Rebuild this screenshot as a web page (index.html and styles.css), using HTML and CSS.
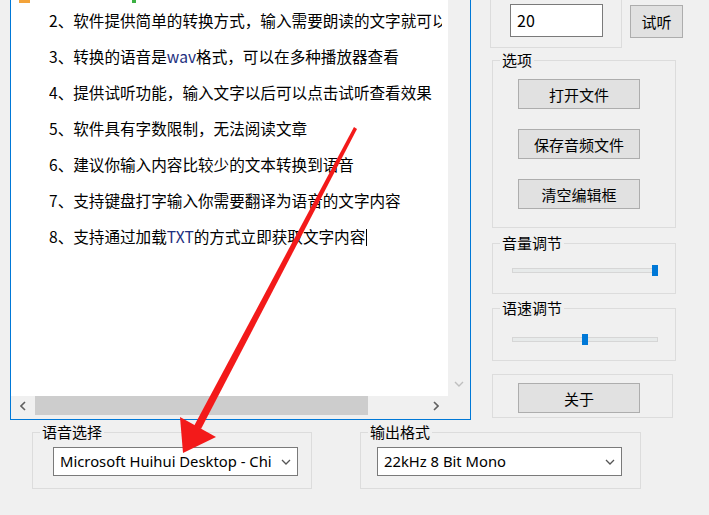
FILE: index.html
```html
<!DOCTYPE html>
<html lang="zh-CN">
<head>
<meta charset="utf-8">
<title>文字转语音</title>
<link rel="stylesheet" href="styles.css">
</head>
<body>
<div class="window">
  <div class="top">
    <div class="editor">
      <div class="content">
        <span class="peek peek-o"></span><span class="peek peek-g"></span>
        <p>2、软件提供简单的转换方式，输入需要朗读的文字就可以将文字转换为语音</p>
        <p>3、转换的语音是<span class="hl">wav</span>格式，可以在多种播放器查看</p>
        <p>4、提供试听功能，输入文字以后可以点击试听查看效果</p>
        <p>5、软件具有字数限制，无法阅读文章</p>
        <p>6、建议你输入内容比较少的文本转换到语音</p>
        <p>7、支持键盘打字输入你需要翻译为语音的文字内容</p>
        <p>8、支持通过加载<span class="hl">TXT</span>的方式立即获取文字内容<span class="caret"></span></p>
      </div>
      <div class="vscroll">
        <svg class="chev" width="10" height="6" viewBox="0 0 10 6"><polyline points="1,1 5,5 9,1" fill="none" stroke="#bfbfbf" stroke-width="1.4"/></svg>
      </div>
      <div class="hscroll">
        <div class="sbtn"><svg width="6" height="10" viewBox="0 0 6 10"><polyline points="5,1 1,5 5,9" fill="none" stroke="#606060" stroke-width="1.6"/></svg></div>
        <div class="thumb"></div>
        <div class="track"></div>
        <div class="sbtn"><svg width="6" height="10" viewBox="0 0 6 10"><polyline points="1,1 5,5 1,9" fill="none" stroke="#606060" stroke-width="1.6"/></svg></div>
      </div>
      <div class="corner"></div>
    </div>

    <div class="side">
      <div class="row1">
        <div class="group g-count">
          <div class="input">20</div>
        </div>
        <div class="btn btn-listen">试听</div>
      </div>

      <div class="group g-options">
        <span class="glabel">选项</span>
        <div class="btn btn-wide">打开文件</div>
        <div class="btn btn-wide">保存音频文件</div>
        <div class="btn btn-wide">清空编辑框</div>
      </div>

      <div class="group g-volume">
        <span class="glabel">音量调节</span>
        <div class="slider"><span class="knob knob-vol"></span></div>
      </div>

      <div class="group g-speed">
        <span class="glabel">语速调节</span>
        <div class="slider"><span class="knob knob-speed"></span></div>
      </div>

      <div class="group g-about">
        <div class="btn btn-wide">关于</div>
      </div>
    </div>
  </div>

  <div class="bottom">
    <div class="group g-voice">
      <span class="glabel">语音选择</span>
      <div class="combo">
        <span class="ctext">Microsoft Huihui Desktop - Chi</span>
        <svg width="10" height="6" viewBox="0 0 10 6"><polyline points="1,1 5,5 9,1" fill="none" stroke="#555" stroke-width="1.3"/></svg>
      </div>
    </div>
    <div class="group g-format">
      <span class="glabel">输出格式</span>
      <div class="combo">
        <span class="ctext">22kHz 8 Bit Mono</span>
        <svg width="10" height="6" viewBox="0 0 10 6"><polyline points="1,1 5,5 9,1" fill="none" stroke="#555" stroke-width="1.3"/></svg>
      </div>
    </div>
  </div>

  <svg class="arrow" width="709" height="515" viewBox="0 0 709 515">
    <polygon points="354,127 357,129 201,429 194,426" fill="#f31a1a"/>
    <polygon points="183,453 180,417 216,437" fill="#f31a1a"/>
  </svg>
</div>
</body>
</html>
```

FILE: styles.css
```css
* { box-sizing: border-box; }

html, body {
  margin: 0;
  padding: 0;
  background: #f0f0f0;
}

.window {
  position: relative;
  width: 709px;
  height: 515px;
  overflow: hidden;
  background: #f0f0f0;
  font-family: "Noto Sans CJK SC", "Noto Sans", sans-serif;
  color: #000;
}

.top {
  display: flex;
  align-items: flex-start;
}

/* ---------- editor ---------- */
.editor {
  margin-left: 10px;
  width: 461px;
  height: 420px;
  border: 1px solid #0078d7;
  border-top: none;
  display: grid;
  grid-template-columns: 437px 22px;
  grid-template-rows: 396px 23px;
}

.content {
  position: relative;
  background: #fff;
  padding: 2px 0 0 38px;
  overflow: hidden;
}

.content p {
  margin: 0;
  width: 393px;
  height: 36px;
  line-height: 36px;
  font-size: 15.6px;
  white-space: nowrap;
  overflow: hidden;
}

.hl { color: #1d2f80; }

.caret {
  display: inline-block;
  width: 1px;
  height: 17px;
  background: #000;
  vertical-align: -3px;
  margin-left: 1px;
}

.peek {
  position: absolute;
  top: 0;
  height: 3px;
}
.peek-o { left: 8px; width: 11px; background: #f3a33a; }
.peek-g { left: 121px; width: 4px; background: #3cb043; }

.vscroll {
  background: #f0f0f0;
  display: flex;
  flex-direction: column;
  justify-content: flex-end;
  align-items: center;
  padding-bottom: 9px;
}

.hscroll {
  background: #f0f0f0;
  display: flex;
  align-items: flex-start;
}

.sbtn {
  width: 24px;
  height: 20px;
  display: flex;
  align-items: center;
  justify-content: center;
}

.thumb {
  width: 333px;
  height: 19px;
  background: #cdcdcd;
}

.track { width: 56px; }

.corner { background: #f0f0f0; }

/* ---------- side panel ---------- */
.side {
  margin-left: 19px;
  width: 219px;
  display: flex;
  flex-direction: column;
  align-items: flex-start;
}

.group {
  position: relative;
  border: 1px solid #dcdcdc;
}

.glabel {
  position: absolute;
  top: -11px;
  left: 7px;
  padding: 0 2px;
  background: #f0f0f0;
  font-size: 15px;
  line-height: 19px;
  white-space: nowrap;
}

.row1 {
  display: flex;
  align-items: flex-start;
}

.g-count {
  width: 132px;
  height: 48px;
  border-top: none;
}

.input {
  margin: 4px 0 0 19px;
  width: 93px;
  height: 33px;
  background: #fff;
  border: 1px solid #7a7a7a;
  padding-left: 6px;
  font-size: 16px;
  line-height: 30px;
}

.btn {
  background: #e1e1e1;
  border: 1px solid #adadad;
  display: flex;
  align-items: center;
  justify-content: center;
  font-size: 15px;
}

.btn-listen {
  margin: 5px 0 0 8px;
  width: 53px;
  height: 33px;
}

.btn-wide {
  width: 122px;
  height: 30px;
}

.g-options {
  margin: 12px 0 0 2px;
  width: 184px;
  height: 168px;
  padding: 18px 0 0 25px;
  display: flex;
  flex-direction: column;
  gap: 20px;
}

.g-volume {
  margin: 15px 0 0 2px;
  width: 184px;
  height: 51px;
  padding: 24px 0 0 19px;
}

.g-speed {
  margin: 14px 0 0 2px;
  width: 184px;
  height: 53px;
  padding: 28px 0 0 19px;
}

.slider {
  position: relative;
  width: 146px;
  height: 5px;
  background: #e7eaea;
  border: 1px solid #d6d6d6;
}

.knob {
  position: absolute;
  top: -4px;
  width: 6px;
  height: 11px;
  background: #0078d7;
}
.knob-vol { left: 139px; }
.knob-speed { left: 69px; }

.g-about {
  margin: 13px 0 0 2px;
  width: 181px;
  height: 44px;
  padding: 8px 0 0 25px;
}

/* ---------- bottom ---------- */
.bottom {
  display: flex;
  margin-top: 12px;
}

.g-voice {
  margin-left: 32px;
  width: 280px;
  height: 57px;
  padding: 14px 0 0 20px;
}

.g-format {
  margin-left: 48px;
  width: 281px;
  height: 57px;
  padding: 14px 0 0 16px;
}

.combo {
  width: 245px;
  height: 29px;
  background: #fff;
  border: 1px solid #7a7a7a;
  display: flex;
  align-items: center;
  justify-content: space-between;
  padding: 0 6px 2px 6px;
}

.combo svg { margin-top: 2px; }

.ctext {
  font-family: "Noto Sans", "Noto Sans CJK SC", sans-serif;
  font-size: 14.8px;
  white-space: nowrap;
  overflow: hidden;
}

.arrow {
  position: absolute;
  left: 0;
  top: 0;
  pointer-events: none;
}
```
